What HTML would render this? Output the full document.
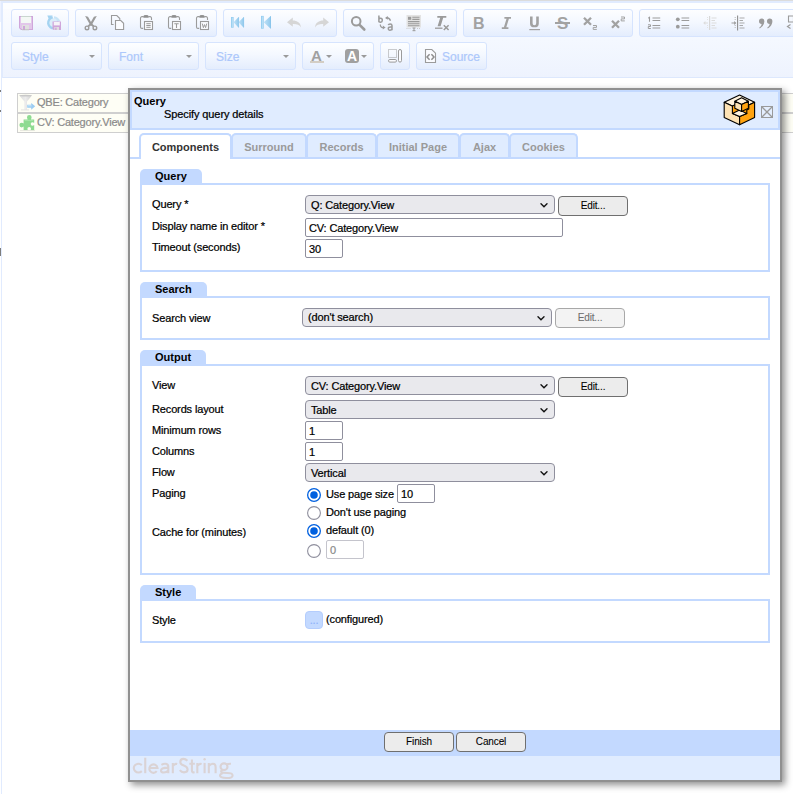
<!DOCTYPE html>
<html>
<head>
<meta charset="utf-8">
<title>Query</title>
<style>
*{box-sizing:border-box;margin:0;padding:0}
html,body{width:793px;height:794px;overflow:hidden;background:#fff}
body{font-family:"Liberation Sans",sans-serif;font-size:11px;color:#000;position:relative;letter-spacing:-0.14px;-webkit-text-stroke:.22px currentColor}
.abs{position:absolute}
/* ---------- page behind ---------- */
#topline{left:0;top:0;width:793px;height:1px;background:#dcdcdc}
#frame{left:1px;top:1px;width:800px;height:800px;border:0 solid #e1ebfe;border-top-width:2px;border-left-width:1px}
#frame2{left:2px;top:3px;width:1px;height:75px;background:#e1ebfe}
#lmark{left:0;top:248px;width:1px;height:8px;background:#7d7d7d}
#lcol{left:0;top:1px;width:1px;height:21px;background:#edf2ff}
.lm{position:absolute;left:0;width:1px;height:2px;background:#7a7a7a}
#tbar{left:3px;top:3px;width:790px;height:75px;background:linear-gradient(#fdfeff 0,#fbfcff 8%,#f4f8ff 50%,#eef3fe 100%);border-bottom:1px solid #dde8fd}
#tbarTop{left:3px;top:3px;width:790px;height:6px;background:#fdfeff}
.grp{position:absolute;height:28px;border:1px solid #d6e4fe;border-radius:3px;background:linear-gradient(#fdfeff 0%,#f4f8ff 45%,#e4edfd 100%)}
.ic{position:absolute;width:16px;height:16px;overflow:visible}
.cmb{position:absolute;height:28px;width:91px;border:1px solid #d6e4fe;border-radius:3px;background:linear-gradient(#fdfeff 0%,#f4f8ff 45%,#e4edfd 100%);font-size:12px;color:#adc8fb;line-height:14px}
.cmb span{position:absolute;left:10px;top:7px;letter-spacing:0}
.cmb i{position:absolute;right:6px;top:12px;width:0;height:0;border-left:3px solid transparent;border-right:3px solid transparent;border-top:3px solid #9a9a9a}
.arr{position:absolute;width:0;height:0;border-left:3px solid transparent;border-right:3px solid transparent;border-top:3px solid #9a9a9a}
/* list rows */
.row{position:absolute;left:17px;width:790px;height:20px;border:1px solid #cfcfcf;background:#fefef5;color:#8b8b8b;font-size:11px;line-height:14px}
.row span{position:absolute;left:19px;top:1px;white-space:nowrap;letter-spacing:-0.2px}
/* ---------- dialog ---------- */
#dlg{left:128px;top:88px;width:654px;height:694px;border:2px solid #909090;background:#fff;box-shadow:3px 3px 7px rgba(0,0,0,.44)}
#hdr{left:0;top:0;width:650px;height:40px;border:2px solid #c3d9ff;background:#e0ecff}
.t{position:absolute;white-space:nowrap;line-height:14px;font-size:11px}
.b,.tab,.leg{font-weight:bold;letter-spacing:0;-webkit-text-stroke:0}
.tab{position:absolute;top:43px;height:25px;border:2px solid #c3d9ff;border-bottom:0;border-radius:5px 5px 0 0;background:#e0ecff;color:#9a9a9a;font-weight:bold;font-size:11px;line-height:14px;text-align:center;padding-top:5px}
.tab.on{background:#fff;color:#333;height:26px;z-index:2}
#tabline{left:0;top:67px;width:650px;height:2px;background:#c3d9ff}
.leg{position:absolute;left:10px;height:14px;background:#c3d9ff;border-radius:5px 5px 0 0;font-weight:bold;font-size:11px;line-height:14px;padding:0 15px;white-space:nowrap}
.box{position:absolute;left:10px;width:630px;border:2px solid #c3d9ff}
.sel{position:absolute;height:19px;width:250px;border:1px solid #8f8f9d;border-radius:4px;background:#e9e9ed;font-size:11px;line-height:14px}
.sel span{position:absolute;left:5px;top:2px;white-space:nowrap}
.sel svg{position:absolute;right:6px;top:7px}
.inp{position:absolute;height:19px;border:1px solid #8f8f9d;border-radius:2px;background:#fff;font-size:11px;line-height:14px}
.inp span{position:absolute;left:3px;top:2px;white-space:nowrap}
.btn{-webkit-text-stroke:.08px currentColor;position:absolute;width:70px;height:20px;border:1px solid #6f6f6f;border-radius:4px;background:#ececec;font-size:10px;line-height:12px;text-align:center;padding-top:3px}
.btn.dis{border-color:#a8a8a8;background:#f3f3f3;color:#6e6e6e}
.rad{position:absolute;width:14px;height:14px;border-radius:50%;border:1px solid #8f8f9d;background:#fff}
.rad.on{border:2px solid #0060df}
.rad.on:after{content:"";position:absolute;left:1.300px;top:1.300px;width:7.400px;height:7.400px;border-radius:50%;background:#0060df}
#foot1{left:0;top:640px;width:650px;height:26px;background:#c3d9ff}
#foot2{left:0;top:666px;width:650px;height:24px;background:#e0ecff}
</style>
</head>
<body>
<div class="abs" id="frame"></div><div class="abs" id="frame2"></div><div class="abs" id="lmark"></div><div class="abs" id="lcol"></div><div class="lm" style="top:90px"></div><div class="lm" style="top:110px"></div>
<div class="abs" id="tbar"></div>
<div class="abs" id="tbarTop"></div>
<div class="abs" id="topline"></div>

<!-- toolbar row 1 -->
<div class="grp" id="g1" style="left:11px;top:9px;width:58px"></div>
<div class="grp" id="g2" style="left:75px;top:9px;width:142px"></div>
<div class="grp" id="g3" style="left:223px;top:9px;width:114px"></div>
<div class="grp" id="g4" style="left:343px;top:9px;width:114px"></div>
<div class="grp" id="g5" style="left:463px;top:9px;width:170px"></div>
<div class="grp" id="g6" style="left:639px;top:9px;width:170px"></div>

<!-- ===== toolbar icons row 1 ===== -->
<svg class="ic" style="left:18px;top:15px" viewBox="0 0 16 16"><path d="M1 1h14v14H3l-2-2z" fill="#cfa6db"/><path d="M2 2h12v12H3.4L2 12.6z" fill="#e2c7ea"/><rect x="3" y="1" width="10" height="7" fill="#f3f8f5"/><rect x="3" y="1" width="10" height="1" fill="#c9d6cf"/><rect x="4" y="10" width="7" height="5" fill="#e0e0e0"/><rect x="5" y="11" width="2" height="4" fill="#cfa6db"/><rect x="4" y="14.4" width="7" height=".8" fill="#b9b9b9"/></svg>
<svg class="ic" style="left:46px;top:15px" viewBox="0 0 16 16"><circle cx="7.300" cy="7.800" r="4.600" fill="#dceefa"/><path d="M6.800 2.400A5.300 5.300 0 1 0 8.500 13.200" fill="none" stroke="#a4d3f1" stroke-width="2.400"/><path d="M8 2.300a5.300 5.300 0 0 1 4.700 4" fill="none" stroke="#c9e5f7" stroke-width="2.200"/><path d="M1.300 .6h5.400L3.200 5z" fill="#a4d3f1"/><path d="M10.600 3.600l4 1.600-3.600 2z" fill="#c9e5f7"/><path d="M6.500 6.500h8.500v8.500H7.800l-1.300-1.300z" fill="#cfa6db"/><rect x="7.800" y="7" width="6" height="3.400" fill="#f6f3f8"/><rect x="8.300" y="12" width="4.700" height="3" fill="#e0e0e0"/><rect x="9.200" y="12.600" width="1.400" height="2.400" fill="#cfa6db"/></svg>
<svg class="ic" style="left:82px;top:15px" viewBox="0 0 16 16"><path d="M3.100 .9L6 1.700 9.700 8.300 12.300 10.800 11 12 8 9.700z" fill="#9b9b9b"/><path d="M14.800 .9L11.900 1.700 8.200 8.300 5.600 10.800 6.900 12 9.900 9.700z" fill="#9b9b9b"/><circle cx="5" cy="12.900" r="1.800" fill="none" stroke="#9b9b9b" stroke-width="1.400"/><circle cx="12.900" cy="12.900" r="1.800" fill="none" stroke="#9b9b9b" stroke-width="1.400"/></svg>
<svg class="ic" style="left:110px;top:15px" viewBox="0 0 16 16"><path d="M3.600 9.500H1.500V.5H6.800L9.800 3.500V5" fill="none" stroke="#9b9b9b" stroke-width="1.100"/><path d="M5.500 5.500H10.800L13.600 8.300V14.500H5.500z" fill="#fbfcff" stroke="#9b9b9b" stroke-width="1.100"/></svg>
<svg class="ic" style="left:138px;top:15px" viewBox="0 0 16 16"><path d="M5.200 13.400H4A1.500 1.500 0 0 1 2.500 11.900V3.100A1.500 1.500 0 0 1 4 1.600H5.500M10.500 1.600H12A1.500 1.500 0 0 1 13.500 3.100V5" fill="none" stroke="#9b9b9b" stroke-width="1.100"/><path d="M5.400 2.700V1.300Q5.400 .1 8 .1T10.600 1.300V2.700z" fill="#8f8f8f"/><rect x="6.500" y="6.500" width="8" height="8" fill="#fbfcff" stroke="#9b9b9b" stroke-width="1.100"/><path d="M8.300 8.700h4.400M8.300 10.500h4.400M8.300 12.300h4.400" stroke="#9b9b9b" stroke-width="1"/></svg>
<svg class="ic" style="left:166px;top:15px" viewBox="0 0 16 16"><path d="M5.200 13.400H4A1.500 1.500 0 0 1 2.500 11.900V3.100A1.500 1.500 0 0 1 4 1.600H5.500M10.500 1.600H12A1.500 1.500 0 0 1 13.500 3.100V5" fill="none" stroke="#9b9b9b" stroke-width="1.100"/><path d="M5.400 2.700V1.300Q5.400 .1 8 .1T10.600 1.300V2.700z" fill="#8f8f8f"/><rect x="6.500" y="6.500" width="8" height="8" fill="#fbfcff" stroke="#9b9b9b" stroke-width="1.100"/><path d="M8.300 8.800h4.400M10.500 8.800v4.200" stroke="#9b9b9b" stroke-width="1.100" fill="none"/></svg>
<svg class="ic" style="left:194px;top:15px" viewBox="0 0 16 16"><path d="M5.200 13.400H4A1.500 1.500 0 0 1 2.500 11.900V3.100A1.500 1.500 0 0 1 4 1.600H5.500M10.500 1.600H12A1.500 1.500 0 0 1 13.500 3.100V5" fill="none" stroke="#9b9b9b" stroke-width="1.100"/><path d="M5.400 2.700V1.300Q5.400 .1 8 .1T10.600 1.300V2.700z" fill="#8f8f8f"/><rect x="6.500" y="6.500" width="8" height="8" fill="#fbfcff" stroke="#9b9b9b" stroke-width="1.100"/><path d="M8.300 8.600L9.400 12.700 10.500 9.600 11.600 12.700 12.700 8.600" stroke="#9b9b9b" stroke-width="1" fill="none"/></svg>
<svg class="ic" style="left:230px;top:15px" viewBox="0 0 16 16"><defs><linearGradient id="tg" x1="0" x2="1"><stop offset="0" stop-color="#c4e3f7"/><stop offset="1" stop-color="#90c9ed"/></linearGradient></defs><rect x="1" y="2" width="2.600" height="10.700" fill="#92ccf0"/><rect x="1.800" y="2.600" width="1" height="9.500" fill="#bfe1f6"/><path d="M8.600 2V12.700L3.600 7.350z" fill="url(#tg)"/><path d="M13.700 2V12.700L8.600 7.350z" fill="url(#tg)"/><path d="M8.600 2.300V12.400M13.600 2.300V12.400" stroke="#86c3ea" stroke-width=".8"/></svg>
<svg class="ic" style="left:258px;top:15px" viewBox="0 0 16 16"><rect x="3" y=".9" width="2.700" height="12.800" fill="#92ccf0"/><rect x="3.850" y="1.500" width="1" height="11.600" fill="#bfe1f6"/><path d="M12.700 .9V13.700L5.700 7.300z" fill="url(#tg)"/><path d="M12.500 1.300V13.300" stroke="#86c3ea" stroke-width=".9"/></svg>
<svg class="ic" style="left:286px;top:15px" viewBox="0 0 16 16"><path d="M6.800 2.600V5.400C11 5.400 14.600 7.400 15 12.400 13.400 9.600 10.800 8.800 6.800 8.900V11.800L1 7.200z" fill="#d6d6d6"/></svg>
<svg class="ic" style="left:314px;top:15px" viewBox="0 0 16 16"><path d="M9.200 2.600V5.400C5 5.400 1.400 7.400 1 12.400 2.600 9.600 5.200 8.800 9.200 8.900V11.800L15 7.200z" fill="#d6d6d6"/></svg>

<svg class="ic" style="left:350px;top:15px" viewBox="0 0 16 16"><circle cx="6.200" cy="6.300" r="4.300" fill="none" stroke="#9b9b9b" stroke-width="2"/><path d="M9.600 9.800L14.300 14.500" stroke="#9b9b9b" stroke-width="2.600" stroke-linecap="round"/></svg>
<svg class="ic" style="left:378px;top:15px" viewBox="0 0 16 16"><path d="M.9 .5V7.200M.9 4.600Q.9 3.300 2.600 3.300T4.300 5.200 2.600 7.200 .9 5.900" fill="none" stroke="#9b9b9b" stroke-width="1.500"/><path d="M10.300 10.200Q10.500 9 12.200 9T14 10.500V15.300M14 12H12.400Q10.300 12 10.300 13.600T12 15.200 14 13.600" fill="none" stroke="#9b9b9b" stroke-width="1.500"/><path d="M8 2.800Q11.500 2.300 12.500 5.800" fill="none" stroke="#9b9b9b" stroke-width="1.300"/><path d="M7 3L9.800 1V4.800z" fill="#9b9b9b"/><path d="M2.300 9.500Q2.300 12.800 6 12.600" fill="none" stroke="#9b9b9b" stroke-width="1.300"/><path d="M7.600 12.500L4.800 10.500V14.500z" fill="#9b9b9b"/></svg>
<svg class="ic" style="left:406px;top:15px" viewBox="0 0 16 16"><rect x=".5" y="0" width="14.500" height="12.500" fill="#e3e3e3"/><rect x="2" y="1.800" width="3.200" height="3" fill="#9b9b9b"/><path d="M6.300 2.300H13.500M6.300 4.400H13.500M2 6.600H13.500M2 8.700H13.500M2 10.800H13.500" stroke="#9b9b9b" stroke-width="1.100"/><path d="M.5 13.500H5M11 13.500H15" stroke="#c9c9c9" stroke-width="1" stroke-dasharray="1 1"/><path d="M6.500 13H9.500M8 13V15.700M6.500 15.700H9.500" stroke="#9b9b9b" stroke-width="1"/></svg>
<svg class="ic" style="left:434px;top:15px" viewBox="0 0 16 16"><path d="M3.300 1H12.300V2.800H9.200L6.600 11.200H3.600L6.200 2.800H3.300z" fill="#9b9b9b"/><path d="M1 13.200H8.500" stroke="#9b9b9b" stroke-width="1.300"/><path d="M9.800 10.200L14.600 15M14.600 10.200L9.800 15" stroke="#9b9b9b" stroke-width="1.500"/></svg>
<!-- group 5 -->
<div class="t b" style="left:473px;top:14px;font-size:16px;line-height:20px;color:#a2a2a2">B</div>
<svg class="ic" style="left:498px;top:15px" viewBox="0 0 16 16"><path d="M6.400 2H13V3.800H10.900L8.300 12.200H10.400V14H3.800V12.200H5.900L8.500 3.800H6.400z" fill="#a2a2a2"/></svg>
<svg class="ic" style="left:526px;top:15px" viewBox="0 0 16 16"><path d="M4 1.500H6.600V8.200Q6.600 10.200 8.400 10.200T10.200 8.200V1.500H12.800V8.400Q12.800 12.300 8.400 12.300T4 8.400z" fill="#a2a2a2"/><path d="M3.300 14.600H14" stroke="#a2a2a2" stroke-width="1.200"/></svg>
<div class="t b" style="left:557px;top:14px;font-size:17px;line-height:20px;color:#a2a2a2">S</div>
<div class="abs" style="left:555px;top:22px;width:15px;height:2px;background:#a2a2a2"></div>
<svg class="ic" style="left:582px;top:15px" viewBox="0 0 16 16"><path d="M2 2.800L9 9.800M9 2.800L2 9.800" stroke="#a2a2a2" stroke-width="2.300"/><path d="M11 10.500H14.500V12.400H11.200V14.400H14.800" fill="none" stroke="#a2a2a2" stroke-width="1"/></svg>
<svg class="ic" style="left:610px;top:15px" viewBox="0 0 16 16"><path d="M2 5.800L9 12.800M9 5.800L2 12.800" stroke="#a2a2a2" stroke-width="2.300"/><path d="M11 2H14.500V3.900H11.200V5.900H14.800" fill="none" stroke="#a2a2a2" stroke-width="1"/></svg>
<!-- group 6 -->
<svg class="ic" style="left:646px;top:15px" viewBox="0 0 16 16"><path d="M2.300 3.200L3.500 2.300V6.800" fill="none" stroke="#9b9b9b" stroke-width="1.100"/><path d="M2 9.800H4.500V11.500H2.300V13.500H4.800" fill="none" stroke="#9b9b9b" stroke-width="1"/><path d="M6.500 3H14.200M6.500 5.500H14.200M6.500 10.500H14.200M6.500 13H14.200" stroke="#9b9b9b" stroke-width="1.200"/></svg>
<svg class="ic" style="left:674px;top:15px" viewBox="0 0 16 16"><circle cx="3.800" cy="4.300" r="1.900" fill="#9b9b9b"/><circle cx="3.800" cy="11.700" r="1.900" fill="#9b9b9b"/><path d="M7.500 3H15.200M7.500 5.500H15.200M7.500 10.500H15.200M7.500 13H15.200" stroke="#9b9b9b" stroke-width="1.200"/></svg>
<svg class="ic" style="left:702px;top:15px" viewBox="0 0 16 16"><path d="M7.600 1V15" stroke="#d8d8d8" stroke-width="1.200"/><path d="M9.500 3H14.500M9.500 5.500H13M9.500 8H14.500M9.500 10.500H13M9.500 13H14.500" stroke="#dcdcdc" stroke-width="1.100"/><path d="M2.500 8H6" stroke="#dcdcdc" stroke-width="1"/><path d="M1.200 8L3.400 6V10z" fill="#dcdcdc"/><path d="M5.500 2V6M5.500 10V14" stroke="#e2e2e2" stroke-width="1" stroke-dasharray="1 1"/></svg>
<svg class="ic" style="left:730px;top:15px" viewBox="0 0 16 16"><path d="M7.600 .5V15.500" stroke="#8e8e8e" stroke-width="1.100"/><path d="M9.500 3H14.500M9.500 5.500H13M9.500 8H14.500M9.500 10.500H13M9.500 13H14.500" stroke="#a2a2a2" stroke-width=".9"/><path d="M1.500 8H5" stroke="#9b9b9b" stroke-width="1"/><path d="M6.400 8L4.200 6V10z" fill="#9b9b9b"/><path d="M5.200 2V6M5.200 10V14" stroke="#b5b5b5" stroke-width="1" stroke-dasharray="1 1"/></svg>
<svg class="ic" style="left:758px;top:15px" viewBox="0 0 16 16"><path d="M1 6.200A2.700 2.700 0 1 1 6.400 6.200Q6.400 10.600 1.800 13.500L1.200 12.700Q3.600 11 3.700 8.900A2.700 2.700 0 0 1 1 6.200z" fill="#9b9b9b"/><path d="M9 6.200A2.700 2.700 0 1 1 14.400 6.200Q14.400 10.600 9.800 13.500L9.200 12.700Q11.600 11 11.700 8.900A2.700 2.700 0 0 1 9 6.200z" fill="#9b9b9b"/></svg>
<svg class="ic" style="left:786px;top:15px" viewBox="0 0 16 16"><path d="M2.500 1H7.500V7H2.500z" fill="none" stroke="#9b9b9b" stroke-width="1.100"/><path d="M4.500 9.500L1.500 11.500 4.500 13.500" fill="none" stroke="#9b9b9b" stroke-width="1.200"/></svg>
<!-- toolbar row 2 -->
<div class="cmb" style="left:11px;top:42px"><span>Style</span><i></i></div>
<div class="cmb" style="left:108px;top:42px"><span>Font</span><i></i></div>
<div class="cmb" style="left:205px;top:42px"><span>Size</span><i></i></div>
<div class="grp" id="g7" style="left:302px;top:42px;width:72px"></div>
<div class="grp" id="g8" style="left:380px;top:42px;width:30px"></div>
<div class="grp" id="g9" style="left:416px;top:42px;width:71px"></div>
<div class="t" style="left:442px;top:50px;font-size:12px;color:#adc8fb;letter-spacing:0">Source</div>


<!-- row 2 icons -->
<div class="t b" style="left:311px;top:47px;font-size:15px;line-height:18px;color:#a0a0a0">A</div>
<div class="abs" style="left:310px;top:61px;width:14px;height:2px;background:#d3cdc4"></div>
<div class="arr" style="left:326px;top:55px"></div>
<div class="abs" style="left:345px;top:49px;width:14px;height:14px;border-radius:3px;background:#a0a0a0"></div>
<div class="t b" style="left:347px;top:48px;font-size:14px;line-height:16px;color:#fff">A</div>
<div class="arr" style="left:361px;top:55px"></div>
<svg class="ic" style="left:387px;top:48px" viewBox="0 0 16 16"><rect x="1.500" y="1.500" width="8" height="8" fill="none" stroke="#9b9b9b" stroke-width="1" stroke-dasharray="1 1"/><rect x="1.500" y="11.500" width="8" height="2.600" rx="1.300" fill="#fbfcff" stroke="#9b9b9b" stroke-width="1"/><rect x="11.500" y="1.500" width="3" height="12.600" rx="1.500" fill="#fbfcff" stroke="#9b9b9b" stroke-width="1"/></svg>
<svg class="ic" style="left:422px;top:48px" viewBox="0 0 16 16"><path d="M3.500 1.500H9.800L13.500 5.200V14.500H3.500z" fill="#fbfcff" stroke="#9b9b9b" stroke-width="1.100"/><path d="M7.600 6.200L5 9 7.600 11.800M9.400 6.200L12 9 9.400 11.800" fill="none" stroke="#8e8e8e" stroke-width="1.500"/></svg>
<!-- list rows -->
<div class="row" style="top:93px"><span>QBE: Category</span></div>
<div class="row" style="top:113px"><span>CV: Category.View</span></div>


<svg class="abs" style="left:19px;top:94px" width="18" height="18" viewBox="0 0 18 18"><defs><linearGradient id="fg" x1="0" x2="1"><stop offset="0" stop-color="#dcdcdc"/><stop offset=".5" stop-color="#ececec"/><stop offset="1" stop-color="#cfcfcf"/></linearGradient></defs><path d="M.3 1.600H12.900L8 7.600V15.800H5.400V7.600z" fill="url(#fg)"/><ellipse cx="6.600" cy="1.700" rx="6.300" ry=".9" fill="#c9c9c9"/><path d="M2 15.900H10" stroke="#dedede" stroke-width=".8"/><path d="M8.200 10.800H12.200V9L16.200 12.300 12.200 15.700V13.800H8.200z" fill="#9ccdf2"/><path d="M8.800 11.800H12.600" stroke="#cfe8fa" stroke-width="1"/></svg>
<svg class="abs" style="left:19px;top:114px" width="18" height="18" viewBox="0 0 18 18"><path d="M4.600 5.400H8.700Q8 4.300 8 3.300A2.300 2.300 0 0 1 12.600 3.300Q12.600 4.300 11.900 5.400H15.200V9Q14.200 8.300 13.400 8.300A1.700 1.700 0 0 0 13.400 11.700Q14.200 11.700 15.200 11V16.300H11.400Q12 15.400 12 14.700A1.800 1.800 0 0 0 8.400 14.700Q8.400 15.400 9 16.300H4.600V12.600Q3.700 13.400 2.700 13.400A2.300 2.300 0 0 1 2.700 8.800Q3.700 8.800 4.600 9.600z" fill="#8edb91"/><path d="M5.600 6.400H14.200" stroke="#a8e6aa" stroke-width="1"/><path d="M1 16.500H16" stroke="#e3e3dc" stroke-width=".8"/></svg>
<!-- dialog -->
<div class="abs" id="dlg">
  <div class="abs" id="hdr"></div>

  <svg class="abs" style="left:588px;top:2px" width="44" height="38" viewBox="0 0 44 38"><g stroke="#000" stroke-width="1.100" stroke-linejoin="round"><path d="M21.600 3.100L36.600 10.300 21.600 17.500 6.200 10.300z" fill="#fff3de"/><path d="M6.200 10.300L21.600 17.500V32.700L6.200 25.500z" fill="#fde2b4"/><path d="M36.600 10.300L21.600 17.500V32.700L36.600 25.500z" fill="#ffa310"/><path d="M14.400 13.900L21.600 10.400 30.800 13.900V17L28.800 18V21.400L21.600 24.600 14.400 21.400z" fill="#ffa310"/><path d="M14.400 21.400L21.600 18 28.800 21.400 21.600 24.600z" fill="#fff3de"/><path d="M23.600 5.800L30.400 9.200 23.600 12.400 16.800 9.200z" fill="#fff3de"/><path d="M16.800 9.200L23.600 12.400V19.400L16.800 16.200z" fill="#fde2b4"/><path d="M30.400 9.200L23.600 12.400V19.400L30.400 16.200z" fill="#ffa310"/></g></svg>
  <svg class="abs" style="left:631px;top:16px" width="12" height="12" viewBox="0 0 12 12"><rect x=".5" y=".5" width="11" height="11" fill="#e4eefe" stroke="#9a9a9a"/><path d="M1 1L11 11M11 1L1 11" stroke="#9a9a9a" stroke-width="1.300"/></svg>
  <div class="t b" style="left:4px;top:4px">Query</div>
  <div class="t" style="left:34px;top:17px;letter-spacing:-.1px">Specify query details</div>

  <div class="tab on" style="left:9px;width:93px">Components</div>
  <div class="tab" style="left:101px;width:76px">Surround</div>
  <div class="tab" style="left:176px;width:71px">Records</div>
  <div class="tab" style="left:246px;width:84px">Initial Page</div>
  <div class="tab" style="left:329px;width:51px">Ajax</div>
  <div class="tab" style="left:379px;width:69px">Cookies</div>
  <div class="abs" id="tabline"></div>

  <!-- Query section -->
  <div class="leg" style="top:79px">Query</div>
  <div class="box" style="top:93px;height:89px"></div>
  <div class="t" style="left:22px;top:107px">Query *</div>
  <div class="t" style="left:22px;top:129px">Display name in editor *</div>
  <div class="t" style="left:22px;top:150px">Timeout (seconds)</div>
  <div class="sel" style="left:175px;top:105px"><span>Q: Category.View</span><svg width="8" height="5" viewBox="0 0 8 5"><path d="M1 .8 L4 3.800 L7 .8" fill="none" stroke="#111" stroke-width="1.350" stroke-linecap="round"/></svg></div>
  <div class="btn" style="left:428px;top:106px">Edit...</div>
  <div class="inp" style="left:175px;top:128px;width:258px"><span>CV: Category.View</span></div>
  <div class="inp" style="left:175px;top:149px;width:38px"><span>30</span></div>

  <!-- Search section -->
  <div class="leg" style="top:192px">Search</div>
  <div class="box" style="top:206px;height:44px"></div>
  <div class="t" style="left:22px;top:221px">Search view</div>
  <div class="sel" style="left:172px;top:218px"><span style="top:1px">(don't search)</span><svg width="8" height="5" viewBox="0 0 8 5"><path d="M1 .8 L4 3.800 L7 .8" fill="none" stroke="#111" stroke-width="1.350" stroke-linecap="round"/></svg></div>
  <div class="btn dis" style="left:425px;top:218px">Edit...</div>

  <!-- Output section -->
  <div class="leg" style="top:260px">Output</div>
  <div class="box" style="top:274px;height:211px"></div>
  <div class="t" style="left:22px;top:288px">View</div>
  <div class="t" style="left:22px;top:312px">Records layout</div>
  <div class="t" style="left:22px;top:333px">Minimum rows</div>
  <div class="t" style="left:22px;top:354px">Columns</div>
  <div class="t" style="left:22px;top:375px">Flow</div>
  <div class="t" style="left:22px;top:396px">Paging</div>
  <div class="t" style="left:22px;top:435px">Cache for (minutes)</div>
  <div class="sel" style="left:175px;top:286px"><span>CV: Category.View</span><svg width="8" height="5" viewBox="0 0 8 5"><path d="M1 .8 L4 3.800 L7 .8" fill="none" stroke="#111" stroke-width="1.350" stroke-linecap="round"/></svg></div>
  <div class="btn" style="left:428px;top:287px">Edit...</div>
  <div class="sel" style="left:175px;top:310px"><span>Table</span><svg width="8" height="5" viewBox="0 0 8 5"><path d="M1 .8 L4 3.800 L7 .8" fill="none" stroke="#111" stroke-width="1.350" stroke-linecap="round"/></svg></div>
  <div class="inp" style="left:175px;top:331px;width:38px"><span>1</span></div>
  <div class="inp" style="left:175px;top:352px;width:38px"><span>1</span></div>
  <div class="sel" style="left:175px;top:373px"><span>Vertical</span><svg width="8" height="5" viewBox="0 0 8 5"><path d="M1 .8 L4 3.800 L7 .8" fill="none" stroke="#111" stroke-width="1.350" stroke-linecap="round"/></svg></div>
  <svg class="abs" style="left:177px;top:398px" width="14" height="14" viewBox="0 0 14 14"><circle cx="7" cy="7" r="6.350" fill="#fff" stroke="#0060df" stroke-width="1.300"/><circle cx="7" cy="7" r="3.800" fill="#0060df"/></svg>
  <div class="t" style="left:196px;top:397px">Use page size</div>
  <div class="inp" style="left:267px;top:394px;width:38px"><span>10</span></div>
  <svg class="abs" style="left:177px;top:416px" width="14" height="14" viewBox="0 0 14 14"><circle cx="7" cy="7" r="6.400" fill="#fff" stroke="#8f8f9d" stroke-width="1.100"/></svg>
  <div class="t" style="left:196px;top:415px">Don't use paging</div>
  <svg class="abs" style="left:177px;top:434px" width="14" height="14" viewBox="0 0 14 14"><circle cx="7" cy="7" r="6.350" fill="#fff" stroke="#0060df" stroke-width="1.300"/><circle cx="7" cy="7" r="3.800" fill="#0060df"/></svg>
  <div class="t" style="left:196px;top:433px">default (0)</div>
  <svg class="abs" style="left:177px;top:454px" width="14" height="14" viewBox="0 0 14 14"><circle cx="7" cy="7" r="6.400" fill="#fff" stroke="#8f8f9d" stroke-width="1.100"/></svg>
  <div class="inp" style="left:196px;top:450px;width:38px;border-color:#c4c4cc;color:#8a8a8a"><span>0</span></div>

  <!-- Style section -->
  <div class="leg" style="top:495px">Style</div>
  <div class="box" style="top:509px;height:44px"></div>
  <div class="t" style="left:22px;top:523px">Style</div>
  <div class="abs" style="left:175px;top:521px;width:18px;height:18px;border:1px solid #b4cdfd;border-radius:4px;background:#c3d9ff;color:#8fb3fb;font-size:11px;line-height:14px;text-align:center;padding-top:1px">...</div>
  <div class="t" style="left:196px;top:522px">(configured)</div>

  <!-- footer -->
  <div class="abs" id="foot1"></div>
  <div class="abs" id="foot2"></div>
  <div class="btn" style="left:254px;top:642px">Finish</div>
  <div class="btn" style="left:326px;top:642px">Cancel</div>
  <svg class="abs" style="left:0;top:662px" width="110" height="28" viewBox="0 0 110 28"><g fill="none" stroke="#dad3d5" stroke-width="2.100"><path d="M11.800 13.100A4.700 4.250 0 1 0 11.800 19.100"/><path d="M15.250 5.700V21.200"/><path d="M19.300 16H27.500A4.100 4.250 0 1 0 26.700 19.200"/><path d="M31.400 12.800Q33.800 11.400 35.800 11.800Q38.300 12.300 38.300 14.700V21.200M38.300 15.600Q31 15.600 31 18.400Q31 20.500 33.800 20.500Q36.800 20.500 38.300 18.300"/><path d="M42.800 10.900V21.200M42.800 14Q44.600 11.300 47.200 12"/><path d="M57.400 8.800Q55.600 6.900 53.600 6.900Q50.300 6.900 50.300 10Q50.300 12.300 53.800 13.600Q57.600 15 57.600 17.600Q57.600 20.400 54 20.400Q51.400 20.400 49.800 18.200"/><path d="M61.900 7.600V18.400Q61.900 20.700 64.600 20.300M59.300 11.800H64.800"/><path d="M67.300 10.900V21.200M67.300 14Q69.100 11.300 71.600 12"/><path d="M74.600 10.900V21.200"/><path d="M78.800 10.900V21.200M78.800 14.200Q80.600 11.800 82.900 11.800Q85.600 11.800 85.600 15V21.200"/><ellipse cx="94" cy="14.700" rx="3.500" ry="3.300"/><path d="M96.600 12.400Q98 11.600 101 11.700"/><path d="M92.600 17.800Q90.200 19 91.600 20.300Q93 21 97 21Q102.600 21 102.600 23.400Q102.600 26 96.400 26Q90 26 90 23.600Q90 21.800 93 21"/></g><circle cx="74.600" cy="7.300" r="1.200" fill="#dbd4d6"/></svg>
</div>
</body>
</html>
